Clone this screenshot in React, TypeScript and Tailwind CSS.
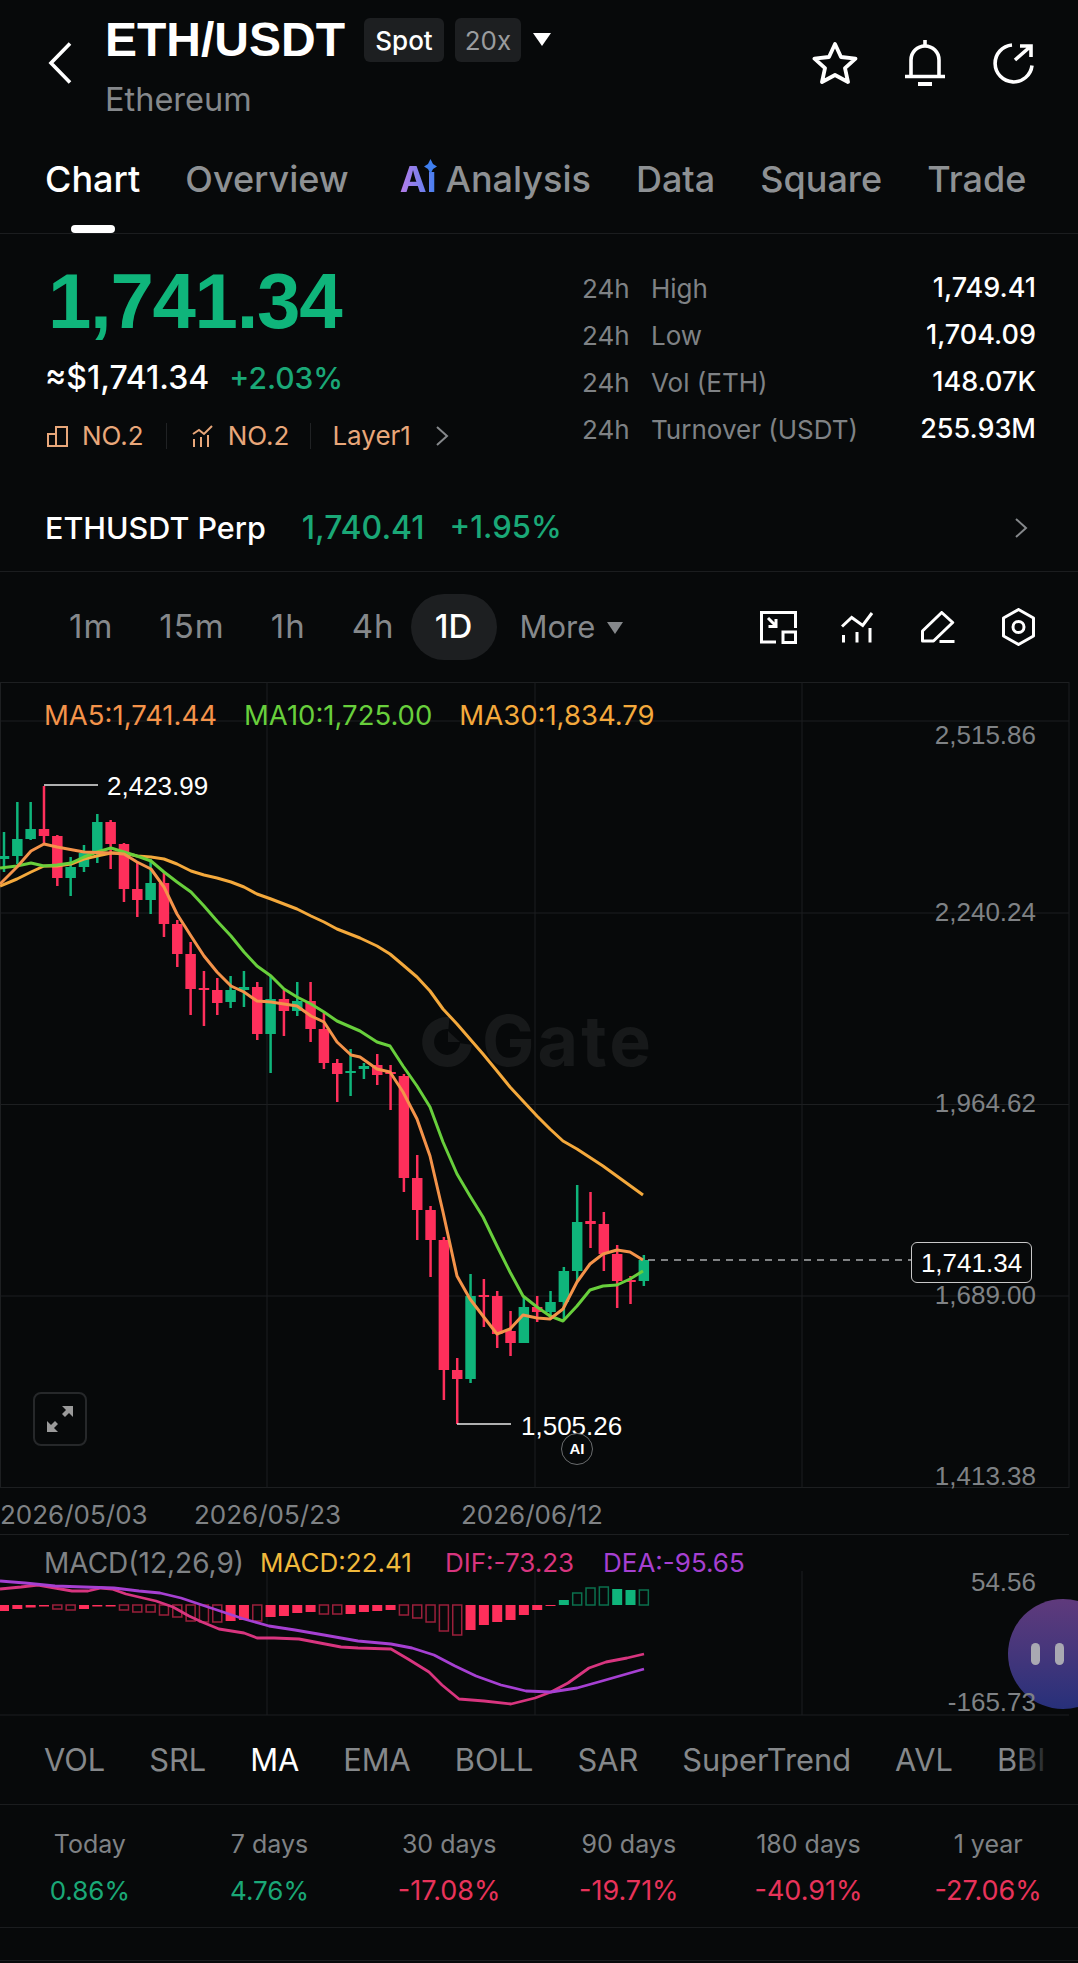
import React from 'react';

type Pt = [number, number];
// wickTop, wickBottom, bodyTop, bodyBottom, up
type Candle = [number, number, number, number, boolean];

const candles: Candle[] = [
  [833, 873, 857, 860, true], [803, 865, 840, 857, true], [803, 841, 830, 840, true], [787, 845, 830, 837, false],
  [836, 887, 837, 879, false], [858, 897, 868, 879, true], [846, 873, 854, 868, true], [815, 864, 823, 854, true],
  [821, 870, 823, 845, false], [844, 903, 845, 890, false], [863, 918, 890, 901, false], [860, 915, 884, 901, true],
  [873, 938, 884, 925, false], [921, 968, 925, 955, false], [943, 1016, 955, 990, false], [972, 1027, 989, 991, false],
  [979, 1016, 991, 1004, false], [977, 1009, 991, 1003, true], [972, 1008, 988, 991, true], [983, 1041, 988, 1035, false],
  [977, 1074, 1000, 1035, true], [991, 1037, 1000, 1012, false], [983, 1017, 1002, 1012, true], [983, 1043, 1002, 1030, false],
  [1014, 1070, 1030, 1064, false], [1060, 1103, 1064, 1075, false], [1050, 1097, 1072, 1074, true], [1064, 1080, 1067, 1070, true],
  [1055, 1086, 1066, 1076, false], [1066, 1111, 1073, 1075, false], [1075, 1193, 1077, 1179, false], [1156, 1241, 1179, 1211, false],
  [1207, 1278, 1211, 1241, false], [1238, 1401, 1241, 1371, false], [1359, 1425, 1371, 1380, false], [1275, 1384, 1297, 1380, true],
  [1280, 1328, 1296, 1298, false], [1292, 1349, 1297, 1335, false], [1312, 1357, 1332, 1344, false], [1297, 1344, 1308, 1344, true],
  [1297, 1323, 1308, 1313, false], [1292, 1320, 1303, 1313, true], [1268, 1320, 1272, 1303, true], [1186, 1283, 1223, 1272, true],
  [1193, 1249, 1222, 1225, false], [1213, 1272, 1225, 1255, false], [1246, 1309, 1255, 1282, false], [1277, 1305, 1281, 1283, false],
  [1256, 1287, 1261, 1282, true],
];

const ma5: Pt[] = [
  [0, 885], [17, 868], [31, 852], [44, 845], [57, 848], [84, 853], [111, 854], [124, 855], [137, 863], [151, 870], [164, 888],
  [177, 915], [191, 937], [204, 957], [217, 973], [231, 987], [244, 993], [257, 1002], [271, 1003], [284, 1005], [297, 1007],
  [311, 1017], [324, 1023], [337, 1043], [351, 1056], [360, 1058], [377, 1070], [390, 1073], [403, 1093], [417, 1120], [430, 1157],
  [443, 1213], [457, 1277], [470, 1300], [483, 1317], [497, 1335], [510, 1330], [523, 1316], [537, 1319], [550, 1320], [563, 1310],
  [577, 1283], [590, 1265], [603, 1255], [617, 1251], [630, 1253], [643, 1261],
];

const ma10: Pt[] = [
  [0, 869], [17, 867], [31, 864], [44, 867], [57, 866], [71, 864], [84, 858], [97, 853], [111, 849], [124, 853], [137, 857],
  [151, 862], [164, 873], [177, 883], [191, 893], [204, 907], [217, 922], [231, 937], [244, 953], [257, 967], [271, 977], [284, 990],
  [297, 998], [311, 1005], [324, 1013], [337, 1022], [360, 1032], [377, 1043], [390, 1047], [403, 1067], [417, 1087], [430, 1108],
  [443, 1143], [457, 1175], [470, 1197], [483, 1218], [497, 1247], [510, 1273], [523, 1297], [537, 1308], [550, 1317], [563, 1322],
  [577, 1307], [590, 1291], [603, 1287], [617, 1286], [630, 1280], [643, 1272],
];

const ma30: Pt[] = [
  [0, 887], [17, 880], [31, 873], [44, 867], [57, 867], [71, 865], [84, 860], [97, 857], [111, 854], [124, 854], [137, 857],
  [151, 858], [164, 860], [177, 865], [191, 872], [204, 876], [217, 879], [231, 883], [244, 888], [257, 895], [271, 900], [284, 905],
  [297, 910], [311, 917], [324, 923], [337, 930], [360, 939], [377, 947], [390, 955], [403, 966], [417, 978], [430, 992], [443, 1010],
  [457, 1025], [470, 1040], [483, 1055], [497, 1072], [510, 1088], [523, 1102], [537, 1117], [550, 1130], [563, 1142], [577, 1150],
  [603, 1167], [643, 1196],
];

// height below (+) or above (-) the zero line, filled or hollow
const macdBars: [number, boolean][] = [
  [6, true], [4, true], [2.5, true], [1.5, true], [4, false], [5, false], [4, true], [1.5, true], [1.5, true], [5, false],
  [7, false], [7, false], [10, false], [12, false], [16, false], [17, false], [17, false], [16, true], [15, true], [16, false],
  [12, true], [11, true], [8, true], [7, true], [9, false], [9, false], [9, true], [7, true], [6, true], [5, true],
  [10, false], [13, false], [17, false], [26, false], [30, false], [25, true], [20, true], [17, true], [15, true], [10, true],
  [5, true], [1, true], [-5, true], [-12, false], [-17, false], [-18, false], [-16, true], [-15, true], [-15, false],
];

const dif: Pt[] = [
  [0, 1590], [21, 1588], [38, 1586], [55, 1589], [72, 1592], [88, 1592], [101, 1589], [112, 1590], [126, 1595], [143, 1599], [156, 1602],
  [173, 1608], [189, 1617], [202, 1623], [219, 1630], [244, 1634], [257, 1639], [274, 1639], [299, 1640], [320, 1644], [341, 1648],
  [358, 1649], [391, 1650], [408, 1660], [429, 1673], [442, 1686], [459, 1700], [484, 1702], [511, 1705], [535, 1699], [551, 1693],
  [568, 1684], [589, 1669], [606, 1663], [627, 1659], [644, 1655],
];

const dea: Pt[] = [
  [0, 1582], [25, 1584], [55, 1587], [84, 1588], [114, 1589], [139, 1592], [160, 1594], [181, 1599], [202, 1606], [223, 1613], [244, 1620],
  [269, 1627], [295, 1631], [324, 1636], [358, 1642], [391, 1645], [412, 1649], [434, 1656], [455, 1667], [476, 1677], [501, 1686],
  [526, 1692], [551, 1693], [577, 1689], [602, 1682], [644, 1670],
];

const toPoints = (pts: Pt[]) => pts.map(p => p.join(',')).join(' ');
const candleX = (i: number) => 4 + i * 13.33;

const GREEN = '#0fb57b';
const RED = '#fe2f5b';

const CandleChart = () => (
  <svg className="absolute inset-0 h-full w-full" viewBox="0 683 1078 807">
    {[683.5, 722, 914, 1105.5, 1297, 1488.5].map(y => (
      <line key={y} x1="0" x2="1069" y1={y} y2={y} stroke="#1d1f21" strokeWidth="1" />
    ))}
    {[0.5, 267, 535, 802, 1069].map(x => (
      <line key={x} x1={x} x2={x} y1="683" y2="1489" stroke="#1d1f21" strokeWidth="1" />
    ))}
    {/* watermark */}
    <path d="M449 1024a19 19 0 1 0 17 21" fill="none" stroke="#17191a" strokeWidth="12" />
    <path d="M448 1032l12 11h-12z" fill="#17191a" />
    {candles.map(([wt, wb, bt, bb, up], i) => (
      <g key={i} fill={up ? GREEN : RED}>
        <rect x={candleX(i) - 1.25} y={wt} width="2.5" height={wb - wt} />
        <rect x={candleX(i) - 5.25} y={bt} width="10.5" height={bb - bt} />
      </g>
    ))}
    <polyline points={toPoints(ma30)} fill="none" stroke="#f4a93c" strokeWidth="3" strokeLinejoin="round" />
    <polyline points={toPoints(ma10)} fill="none" stroke="#68cf3c" strokeWidth="3" strokeLinejoin="round" />
    <polyline points={toPoints(ma5)} fill="none" stroke="#f4934a" strokeWidth="3" strokeLinejoin="round" />
    <line x1="44" x2="98" y1="786" y2="786" stroke="#e8e8e8" strokeWidth="1.5" />
    <line x1="457" x2="511" y1="1425" y2="1425" stroke="#e8e8e8" strokeWidth="1.5" />
    <line x1="648" x2="911" y1="1261" y2="1261" stroke="#a9abad" strokeWidth="1.5" strokeDasharray="7 6" />
  </svg>
);

const MacdChart = () => (
  <svg className="absolute inset-0 h-full w-full" viewBox="0 1535 1078 182">
    <line x1="0" x2="1069" y1="1535.5" y2="1535.5" stroke="#1d1f21" strokeWidth="1" />
    <line x1="0" x2="1069" y1="1716" y2="1716" stroke="#1d1f21" strokeWidth="1" />
    {[267, 535, 802].map(x => (
      <line key={x} x1={x} x2={x} y1="1572" y2="1716" stroke="#1d1f21" strokeWidth="1" />
    ))}
    {macdBars.map(([h, filled], i) => {
      const color = h < 0 ? GREEN : RED;
      const top = h < 0 ? 1606 + h : 1606;
      const height = Math.abs(h);
      if (filled) return <rect key={i} x={candleX(i) - 5} y={top} width="10" height={height} fill={color} />;
      return <rect key={i} x={candleX(i) - 4.5} y={top} width="9" height={height} fill="none" stroke={color} strokeOpacity="0.6" strokeWidth="1.5" />;
    })}
    <polyline points={toPoints(dif)} fill="none" stroke="#d8357f" strokeWidth="2.8" strokeLinejoin="round" />
    <polyline points={toPoints(dea)} fill="none" stroke="#a640d2" strokeWidth="2.8" strokeLinejoin="round" />
  </svg>
);

const BackIcon = () => (
  <svg width="24" height="42" viewBox="0 0 24 42" fill="none" stroke="#fff" strokeWidth="3.6">
    <path d="M22 1.500 3 21l19 19.500" />
  </svg>
);

const StarIcon = () => (
  <svg width="46" height="44" viewBox="0 0 46 44" fill="none" stroke="#fff" strokeWidth="3.8" strokeLinejoin="round">
    <path d="M23 3l6 13 14.500 1.600-10.500 9.600 3 13.800-13-7-13 7 3-13.800L2.500 17.600 17 16z" />
  </svg>
);

const BellIcon = () => (
  <svg width="40" height="46" viewBox="0 0 40 46" fill="none" stroke="#fff" strokeWidth="3.6">
    <path d="M6 36V20a14 14 0 0 1 28 0v16" />
    <path d="M0 36.500h40M20 0v5" />
    <path d="M13 44h14" strokeWidth="4" />
  </svg>
);

const ShareIcon = () => (
  <svg width="41" height="41" viewBox="0 0 41 41" fill="none" stroke="#fff" strokeWidth="3.6">
    <path d="M19 2a18.500 18.500 0 1 0 20 20.500" />
    <path d="M22 17 38 3M27 3h11v11" />
  </svg>
);

const ScreenIcon = () => (
  <svg width="37" height="33" viewBox="0 0 37 33" fill="none" stroke="#fff" strokeWidth="3">
    <path d="M16 31H1.500V1.500h34V17" />
    <rect x="23" y="21" width="12.500" height="10.500" />
    <path d="M8 7l8 8M16 8v7.500H8.500" />
  </svg>
);

const IndicatorIcon = () => (
  <svg width="33" height="32" viewBox="0 0 33 32" fill="none" stroke="#fff" strokeWidth="3">
    <path d="M1 15.500 10.700 6.500l11 8L31 2" />
    <path d="M2.500 24v7.500M16 21v10.500M29 17v14.500" />
  </svg>
);

const PencilIcon = () => (
  <svg width="34" height="32" viewBox="0 0 34 32" fill="none" stroke="#fff" strokeWidth="3" strokeLinejoin="round">
    <path d="M1.500 20 20.700 1.500l11 10L12.500 30h-11z" />
    <path d="M18.500 30.500h15" />
  </svg>
);

const HexIcon = () => (
  <svg width="33" height="38" viewBox="0 0 33 38" fill="none" stroke="#fff" strokeWidth="3" strokeLinejoin="round">
    <path d="M16.500 1.500 31.500 10v18l-15 8.500-15-8.500V10z" />
    <circle cx="16.500" cy="19" r="5.500" />
  </svg>
);

const ChevronRight = ({ className }: { className?: string }) => (
  <svg className={className} width="14" height="20" viewBox="0 0 14 20" fill="none" stroke="currentColor" strokeWidth="2">
    <path d="M2 1l10 9-10 9" />
  </svg>
);

const RankBarsIcon = () => (
  <svg className="ml-[2px]" width="22" height="21" viewBox="0 0 22 21" fill="none" stroke="#e8a77a" strokeWidth="2">
    <path d="M1 8h8v12H1zM9 1h11v19H9z" />
  </svg>
);

const RankTrendIcon = () => (
  <svg width="22" height="22" viewBox="0 0 22 22" fill="none" stroke="#e8a77a" strokeWidth="2">
    <path d="M1 9l6-4 5 4 8-8" />
    <path d="M2 14v8M9 12v10M16 10v12" />
  </svg>
);

const tabs = ['Overview', 'Analysis', 'Data', 'Square', 'Trade'];
const timeframes = ['1m', '15m', '1h', '4h'];
const indicators = ['VOL', 'SRL', 'MA', 'EMA', 'BOLL', 'SAR', 'SuperTrend', 'AVL', 'BBI'];
const stats = [
  { label: 'High', value: '1,749.41' },
  { label: 'Low', value: '1,704.09' },
  { label: 'Vol (ETH)', value: '148.07K' },
  { label: 'Turnover (USDT)', value: '255.93M' },
];
const periods = [
  { label: 'Today', value: '0.86%', up: true },
  { label: '7 days', value: '4.76%', up: true },
  { label: '30 days', value: '-17.08%', up: false },
  { label: '90 days', value: '-19.71%', up: false },
  { label: '180 days', value: '-40.91%', up: false },
  { label: '1 year', value: '-27.06%', up: false },
];

const App: React.FC = () => {
  return (
    <div className="h-[1963px] w-[1078px] overflow-hidden bg-[#07090a] font-['Inter',sans-serif] text-white">
      {/* Header */}
      <header className="flex h-[120px] items-start pl-[48px]">
        <div className="mt-[42px] w-[57px]"><BackIcon /></div>
        <div>
          <div className="flex items-start">
            <h1 className="mt-[12px] font-['Liberation_Sans',sans-serif] text-[48px] leading-[56px] font-bold">ETH/USDT</h1>
            <span className="mt-[18px] ml-[19px] flex h-[44px] w-[80px] items-center justify-center rounded-md bg-[#1d1f21] text-[26px] font-medium">Spot</span>
            <span className="mt-[18px] ml-[11px] flex h-[44px] w-[66px] items-center justify-center rounded-md bg-[#1d1f21] text-[26px] text-[#9a9c9e]">20x</span>
            <span className="mt-[33px] ml-[12px] h-0 w-0 border-x-[9px] border-t-[13px] border-x-transparent border-t-white" />
          </div>
          <p className="mt-[14px] text-[32.5px] leading-[36px] text-[#85888b]">Ethereum</p>
        </div>
        <div className="mt-[40px] ml-auto flex items-center pr-[44px]">
          <StarIcon />
          <span className="ml-[47px]"><BellIcon /></span>
          <span className="ml-[48px]"><ShareIcon /></span>
        </div>
      </header>

      {/* Tabs */}
      <nav className="flex h-[114px] items-start gap-[45px] border-b border-[#1b1d1f] pt-[37px] pl-[45px] text-[36px] leading-[44px] font-medium text-[#8e9194]">
        <span className="relative text-white">
          Chart
          <span className="absolute top-[68px] left-[26px] h-[8px] w-[44px] rounded-full bg-white" />
        </span>
        {tabs.map(t => (
          <span key={t} className="flex items-center">
            {t === 'Analysis' && (
              <span className="relative mr-[9px] ml-[6px] bg-gradient-to-r from-[#b57be8] to-[#3f7ff0] bg-clip-text font-bold text-transparent">
                Aı
                <svg className="absolute top-[2px] right-[-1px]" width="13" height="15" viewBox="0 0 13 15"><path d="M6.500 0 9 5l4 2.500L9 10l-2.500 5L4 10 0 7.500 4 5z" fill="#3f7ff0" /></svg>
              </span>
            )}
            {t}
          </span>
        ))}
      </nav>

      {/* Price and 24h stats */}
      <section className="flex h-[250px] justify-between pr-[42px] pl-[45px]">
        <div>
          <p className="mt-[24px] ml-[3px] font-['Liberation_Sans',sans-serif] text-[78px] leading-[86px] font-bold tracking-[-1.3px] text-[#0fb57b]">1,741.34</p>
          <div className="mt-[14px] flex items-center leading-[40px]">
            <span className="text-[32px] font-medium">≈$1,741.34</span>
            <span className="ml-[20px] text-[30px] font-medium text-[#1aa877]">+2.03%</span>
          </div>
          <div className="mt-[22px] flex items-center text-[26px] leading-[32px] text-[#e8a77a]">
            <RankBarsIcon />
            <span className="ml-[13px]">NO.2</span>
            <span className="mr-[25px] ml-[22px] h-[26px] w-px bg-[#202224]" />
            <RankTrendIcon />
            <span className="ml-[14px]">NO.2</span>
            <span className="mx-[21px] h-[26px] w-px bg-[#202224]" />
            <span>Layer1</span>
            <ChevronRight className="ml-[24px] text-[#85888b]" />
          </div>
        </div>
        <div className="w-[454px] pt-[31px]">
          {stats.map(s => (
            <div key={s.label} className="flex h-[47px] items-center text-[26px]">
              <span className="w-[69px] text-[#7f8285]">24h</span>
              <span className="text-[#7f8285]">{s.label}</span>
              <span className="ml-auto text-[27px] font-medium">{s.value}</span>
            </div>
          ))}
        </div>
      </section>

      {/* Perp row */}
      <div className="flex h-[88px] items-center border-b border-[#1b1d1f] pr-[50px] pl-[45px] font-medium">
        <span className="text-[30.5px]">ETHUSDT Perp</span>
        <span className="ml-[36px] text-[32px] text-[#1aa877]">1,740.41</span>
        <span className="ml-[25px] text-[31px] text-[#1aa877]">+1.95%</span>
        <ChevronRight className="ml-auto text-[#85888b]" />
      </div>

      {/* Timeframes and tools */}
      <div className="flex h-[110px] items-center pr-[43px] pl-[46px] text-[31px] text-[#85888b]">
        {timeframes.map(t => (
          <span key={t} className="px-[23px] text-[33px] tracking-[1px]">{t}</span>
        ))}
        <span className="-ml-[7px] flex h-[66px] w-[86px] items-center justify-center rounded-full bg-[#1d1f21] text-[33px] font-medium text-white">1D</span>
        <span className="ml-[23px]">More</span>
        <span className="mt-[2px] ml-[12px] h-0 w-0 border-x-[8px] border-t-[12px] border-x-transparent border-t-[#85888b]" />
        <div className="ml-auto flex items-center">
          <ScreenIcon />
          <span className="ml-[44px]"><IndicatorIcon /></span>
          <span className="ml-[47px]"><PencilIcon /></span>
          <span className="ml-[47px]"><HexIcon /></span>
        </div>
      </div>

      {/* Main chart */}
      <div className="relative h-[807px] font-['Liberation_Sans',sans-serif] text-[26px] leading-[30px]">
        <span className="absolute top-[334px] left-[482px] font-['Inter',sans-serif] text-[70px] leading-[50px] font-bold tracking-[3px] text-[#17191a]">Gate</span>
        <CandleChart />
        <div className="absolute top-[18px] left-[44px] flex gap-[27px] font-['Inter',sans-serif] text-[27.5px]">
          <span className="text-[#f4934a]">MA5:1,741.44</span>
          <span className="text-[#68cf3c]">MA10:1,725.00</span>
          <span className="text-[#f4a93c]">MA30:1,834.79</span>
        </div>
        <span className="absolute top-[38px] right-[42px] text-[#7f8285]">2,515.86</span>
        <span className="absolute top-[215px] right-[42px] text-[#7f8285]">2,240.24</span>
        <span className="absolute top-[406px] right-[42px] text-[#7f8285]">1,964.62</span>
        <span className="absolute top-[598px] right-[42px] text-[#7f8285]">1,689.00</span>
        <span className="absolute top-[779px] right-[42px] text-[#7f8285]">1,413.38</span>
        <span className="absolute top-[89px] left-[107px]">2,423.99</span>
        <span className="absolute top-[729px] left-[521px]">1,505.26</span>
        <span className="absolute top-[751px] left-[561px] flex h-[32px] w-[32px] items-center justify-center rounded-full border border-[#6a6c6e] bg-[#07090a] text-[15px] font-bold">AI</span>
        <span className="absolute top-[560px] left-[911px] flex h-[41px] w-[121px] items-center justify-center rounded-md border border-[#c8c8c8] bg-[#07090a]">1,741.34</span>
        <span className="absolute top-[710px] left-[33px] flex h-[54px] w-[54px] items-center justify-center rounded-lg border-2 border-[#26282a]">
          <svg width="26" height="26" viewBox="0 0 26 26" fill="#9a9a9a">
            <path d="M15 0h11v11l-4-4-4 4-3-3 4-4zM0 15l4 4 4-4 3 3-4 4 4 4H0z" />
          </svg>
        </span>
      </div>

      {/* Dates */}
      <div className="flex h-[45px] items-center pt-[5px] text-[26px] text-[#7f8285]">
        <span className="w-[194px]">2026/05/03</span>
        <span className="w-[267px]">2026/05/23</span>
        <span>2026/06/12</span>
      </div>

      {/* MACD */}
      <div className="relative h-[182px] text-[26px] leading-[30px]">
        <MacdChart />
        <div className="absolute top-[14px] left-[44px] flex items-center">
          <span className="w-[216px] text-[28px] text-[#7f8285]">MACD(12,26,9)</span>
          <span className="w-[185px] text-[#f0b93c]">MACD:22.41</span>
          <span className="w-[158px] text-[#d8357f]">DIF:-73.23</span>
          <span className="text-[#a640d2]">DEA:-95.65</span>
        </div>
        <span className="absolute top-[33px] right-[42px] font-['Liberation_Sans',sans-serif] text-[#7f8285]">54.56</span>
        <span className="absolute top-[65px] left-[1008px] flex h-[110px] w-[110px] items-center gap-[15px] rounded-full bg-gradient-to-b from-[#5f3a7c] to-[#27307a] pl-[23px]">
          <span className="h-[22px] w-[9px] rounded-full bg-[#a9a9b2]" />
          <span className="h-[22px] w-[9px] rounded-full bg-[#a9a9b2]" />
        </span>
        <span className="absolute top-[153px] right-[42px] font-['Liberation_Sans',sans-serif] text-[#7f8285]">-165.73</span>
      </div>

      {/* Indicators */}
      <div className="relative flex h-[89px] items-center gap-[44px] overflow-hidden border-b border-[#1b1d1f] pl-[44px] text-[30.8px] text-[#85888b]">
        {indicators.map(i => (
          <span key={i} className={i === 'MA' ? 'text-white' : ''}>{i}</span>
        ))}
        <span className="absolute top-0 right-0 h-full w-[62px] bg-gradient-to-r from-transparent to-[#07090a] to-60%" />
      </div>

      {/* Period change */}
      <div className="grid h-[123px] grid-cols-6 border-b border-[#1b1d1f] pt-[21px] text-center text-[25px] leading-[36px]">
        {periods.map(p => (
          <div key={p.label}>
            <p className="text-[#7f8285]">{p.label}</p>
            <p className={`mt-[11px] ${p.up ? 'text-[26px] text-[#1aa877]' : 'text-[27px] text-[#e8335a]'}`}>{p.value}</p>
          </div>
        ))}
      </div>
      <div className="h-[33px] border-b border-[#1b1d1f]" />
    </div>
  );
};

export default App;
